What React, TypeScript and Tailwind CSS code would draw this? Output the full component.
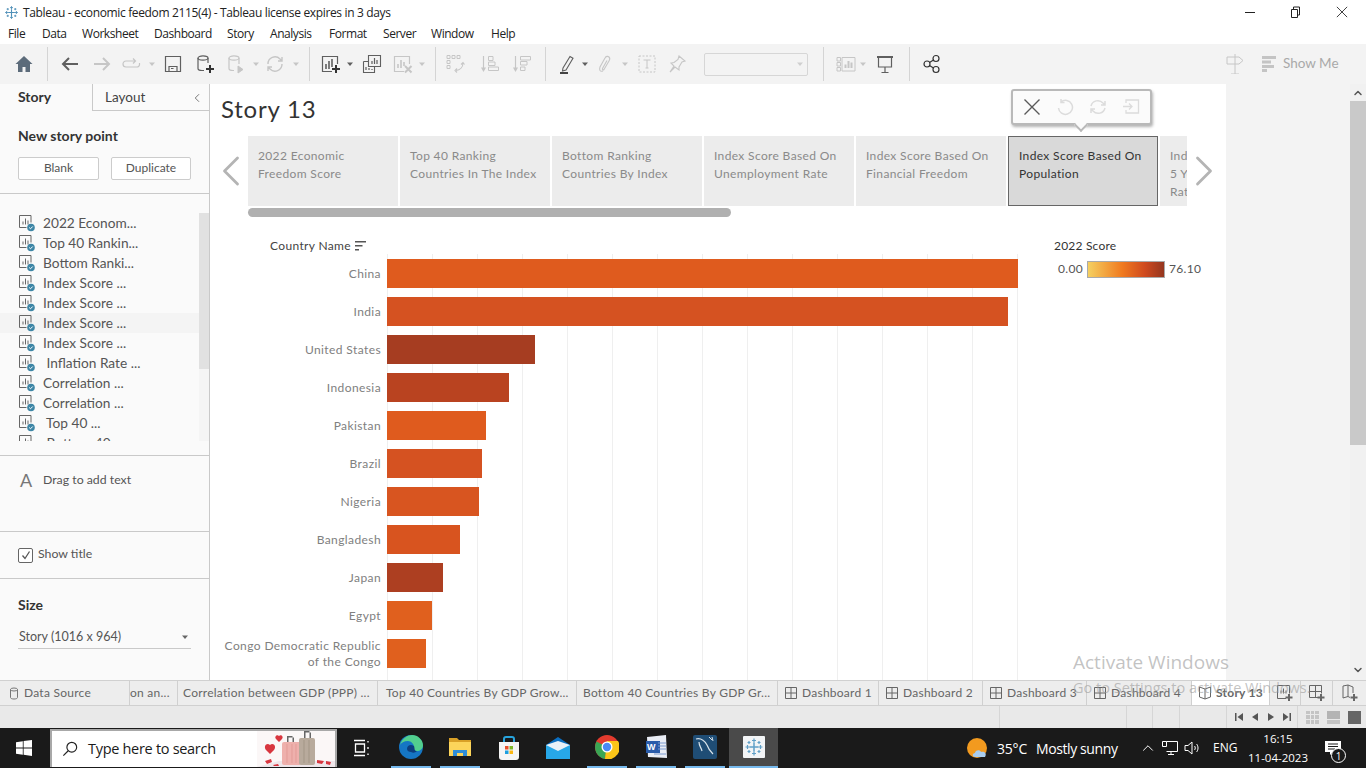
import type { ReactNode } from "react";
import { ChevronLeft, ChevronRight, ChevronUp, ChevronDown } from "lucide-react";

const menus = [
  { label: "File", w: "w-[34px]" },
  { label: "Data", w: "w-[40px]" },
  { label: "Worksheet", w: "w-[72px]" },
  { label: "Dashboard", w: "w-[73px]" },
  { label: "Story", w: "w-[43px]" },
  { label: "Analysis", w: "w-[59px]" },
  { label: "Format", w: "w-[54px]" },
  { label: "Server", w: "w-[48px]" },
  { label: "Window", w: "w-[60px]" },
  { label: "Help", w: "w-[34px]" },
];

const storyPoints = [
  "2022 Econom...",
  "Top 40 Rankin...",
  "Bottom Ranki...",
  "Index Score ...",
  "Index Score ...",
  "Index Score ...",
  "Index Score ...",
  " Inflation Rate ...",
  "Correlation ...",
  "Correlation ...",
  " Top 40 ...",
  " Bottom 40 ...",
];

const captions = [
  { text: ["2022 Economic", "Freedom Score"] },
  { text: ["Top 40 Ranking", "Countries In The Index"] },
  { text: ["Bottom Ranking", "Countries By Index"] },
  { text: ["Index Score Based On", "Unemployment Rate"] },
  { text: ["Index Score Based On", "Financial Freedom"] },
  { text: ["Index Score Based On", "Population"], active: true },
  { text: ["Index Score Based On", "5 Year GDP Growth", "Rate"] },
];

const bars = [
  { name: ["China"], bar: "w-[631px] bg-[#df5b1e]" },
  { name: ["India"], bar: "w-[621px] bg-[#d55221]" },
  { name: ["United States"], bar: "w-[148px] bg-[#a63d21]" },
  { name: ["Indonesia"], bar: "w-[122px] bg-[#b94320]" },
  { name: ["Pakistan"], bar: "w-[99px] bg-[#df5b1e]" },
  { name: ["Brazil"], bar: "w-[95px] bg-[#d55221]" },
  { name: ["Nigeria"], bar: "w-[92px] bg-[#d85520]" },
  { name: ["Bangladesh"], bar: "w-[73px] bg-[#d8541f]" },
  { name: ["Japan"], bar: "w-[56px] bg-[#ad3f21]" },
  { name: ["Egypt"], bar: "w-[45px] bg-[#e0601e]" },
  { name: ["Congo Democratic Republic", "of the Congo"], bar: "w-[39px] bg-[#e0601e]" },
];

const sheetTabs = [
  { label: "on an...", w: "w-[48px]", pad: "pl-0" },
  { label: "Correlation between GDP (PPP) ...", w: "w-[200px]", pad: "pl-[5px]" },
  { label: "Top 40 Countries By GDP Grow...", w: "w-[199px]", pad: "pl-[8px]" },
  { label: "Bottom 40 Countries By GDP Gr...", w: "w-[201px]", pad: "pl-[6px]" },
];

const dashTabs = [
  { label: "Dashboard 1", w: "w-[101px]" },
  { label: "Dashboard 2", w: "w-[104px]" },
  { label: "Dashboard 3", w: "w-[104px]" },
  { label: "Dashboard 4", w: "w-[105px]" },
];

function Ico({ children, className = "" }: { children: ReactNode; className?: string }) {
  return (
    <svg viewBox="0 0 20 20" fill="none" stroke="currentColor" className={`h-5 w-5 shrink-0 ${className}`}>
      {children}
    </svg>
  );
}

function Caret({ className = "" }: { className?: string }) {
  return (
    <svg viewBox="0 0 8 8" className={`h-2 w-2 shrink-0 fill-current ${className}`}>
      <path d="M1 2.5h6L4 6z" />
    </svg>
  );
}

function Sep({ className = "" }: { className?: string }) {
  return <div className={`h-[34px] w-px shrink-0 bg-[#d4d4d4] ${className}`} />;
}

function Plus() {
  return <path d="M15 11v8M11 15h8" stroke="#333" strokeWidth="2" />;
}

function TableauMark({ className = "", color = "#4f90b8" }: { className?: string; color?: string }) {
  return (
    <svg viewBox="0 0 20 20" className={className} stroke={color} strokeWidth="1.2" fill="none">
      <path d="M10 5.5v9M5.5 10h9" strokeWidth="1.5" />
      <path d="M10 1.5v4M8 3.5h4M10 14.5v4M8 16.5h4M1.5 10h4M3.5 8v4M14.5 10h4M16.5 8v4" />
      <path d="M5 4v3M3.5 5.5h3M15 4v3M13.5 5.5h3M5 13v3M3.5 14.5h3M15 13v3M13.5 14.5h3" />
    </svg>
  );
}

function Toolbar() {
  const on = "text-[#5f5f5f]";
  const off = "text-[#c6c6c6]";
  return (
    <div className="flex h-10 shrink-0 items-center bg-[#f3f3f3] pl-[14px] pr-[29px]">
      <svg viewBox="0 0 20 20" className="h-5 w-5 shrink-0 fill-[#5c6b7a]">
        <path d="M10 2 1.5 10H4v8h4.5v-5h3v5H16v-8h2.500z" />
      </svg>
      <Sep className="ml-[13px]" />
      <Ico className={`ml-[12px] ${on}`}>
        <path d="M18 10H3M9 4l-6 6 6 6" strokeWidth="2" />
      </Ico>
      <Ico className={`ml-[12px] ${off}`}>
        <path d="M2 10h15M11 4l6 6-6 6" strokeWidth="2" />
      </Ico>
      <Ico className={`ml-[10px] ${off}`}>
        <path d="M13 7H4a2.500 2.500 0 0 0 0 6h11a2.500 2.500 0 0 0 2.500-2.500V9M11 4.500 13.500 7 11 9.500" strokeWidth="1.200" />
      </Ico>
      <Caret className={`ml-[6px] ${off}`} />
      <Ico className={`ml-[7px] ${on}`}>
        <path d="M2.500 2.500h15v15h-15zM6 17.500v-5h8v5M8 14.500h2.500" strokeWidth="1.200" />
      </Ico>
      <Ico className={`ml-[12px] ${on}`}>
        <ellipse cx="8" cy="4" rx="5" ry="2.200" strokeWidth="1.200" />
        <path d="M3 4v10.500c0 1.300 2 2 4 2h2M13 4v5" strokeWidth="1.200" />
        <Plus />
      </Ico>
      <Ico className={`ml-[11px] ${off}`}>
        <ellipse cx="8" cy="4" rx="5" ry="2.200" strokeWidth="1.200" />
        <path d="M3 4v10.500c0 1.300 2 2 4 2h1M13 4v6" strokeWidth="1.200" />
        <path d="M12 12l5 3.500-5 3.500z" fill="currentColor" />
      </Ico>
      <Caret className={`ml-[6px] ${off}`} />
      <Ico className={`ml-[5px] ${off}`}>
        <path d="M3 10a7 7 0 0 1 12-5l2 2M17 10a7 7 0 0 1-12 5l-2-2M17 3v4h-4M3 17v-4h4" strokeWidth="1.400" />
      </Ico>
      <Caret className={`ml-[7px] ${off}`} />
      <Sep className="ml-[9px]" />
      <Ico className={`ml-[11px] ${on}`}>
        <path d="M11 17.500H1.500v-15h15V10" strokeWidth="1.200" />
        <path d="M5 10v5M8 7v8M11 5v8" strokeWidth="1.600" />
        <Plus />
      </Ico>
      <Caret className={`ml-[5px] ${on}`} />
      <Ico className={`ml-[8px] ${on}`}>
        <path d="M6.500 1.500h12v11h-12zM1.500 7.500h5M1.500 7.500v11h11v-6" strokeWidth="1.100" />
        <path d="M10 10V7M12.500 10V4M15 10V6M4 16v-3M7 16v-2M10 16v-1" strokeWidth="1.200" />
      </Ico>
      <Ico className={`ml-[11px] ${off}`}>
        <path d="M11 17.500H1.500v-15h15V10" strokeWidth="1.200" />
        <path d="M5 14v-4M8 14V6M11 12V8" strokeWidth="1.600" />
        <path d="m12 12 6.500 6.500M18.500 12 12 18.500" strokeWidth="2" />
      </Ico>
      <Caret className={`ml-[5px] ${off}`} />
      <Sep className="ml-[9px]" />
      <Ico className={`ml-[10px] ${off}`}>
        <path d="M1 1.500h3v3H1zM6 1.500h3v3H6zM11 1.500h3v3h-3zM1 6.500h3v3H1zM1 11.500h3v3H1z" strokeWidth="1" />
        <path d="M17 9c0 4-3 7-7 7.500M15 10.500 17 8.500l1.500 2M11 14.500 9 16.500l2 2" strokeWidth="1.100" />
      </Ico>
      <Ico className={`ml-[14px] ${off}`}>
        <path d="M3.500 2v14" strokeWidth="1.200" />
        <path d="M1 13.500h5L3.500 18z" fill="currentColor" stroke="none" />
        <path d="M8.500 2.500h4.500v4H8.500zM8.500 8h6.500v3.500H8.500zM8.500 13h10v3.500h-10z" strokeWidth="1" />
      </Ico>
      <Ico className={`ml-[12px] ${off}`}>
        <path d="M3.500 2v14" strokeWidth="1.200" />
        <path d="M1 13.500h5L3.500 18z" fill="currentColor" stroke="none" />
        <path d="M8.500 2.500h10v3.500h-10zM8.500 7.500h6.500v3.500H8.500zM8.500 13h4.500v3.500H8.500z" strokeWidth="1" />
      </Ico>
      <Sep className="ml-[13px]" />
      <Ico className={`ml-[11px] ${on}`}>
        <path d="M6 14 13 2.500l3 1.800L9 16l-3.500 1z" strokeWidth="1.100" />
        <path d="M3 19h8" strokeWidth="2" stroke="#444" />
      </Ico>
      <Caret className={`ml-[4px] ${on}`} />
      <Ico className={`ml-[6px] ${off}`}>
        <path d="M8 17c-3 1-4-1-3-4l5-9c1-2 3-2 4-1s1 2.500 0 4l-5 8.500c-1 1-2 0-1.500-1l4.500-8" strokeWidth="1.100" />
      </Ico>
      <Caret className={`ml-[6px] ${off}`} />
      <Ico className={`ml-[8px] ${off}`}>
        <path d="M2 2h16v16H2z" strokeWidth="1" strokeDasharray="2 1.500" />
        <path d="M6.500 6h7M10 6v8M8.500 14h3" strokeWidth="1" />
      </Ico>
      <Ico className={`ml-[10px] ${off}`}>
        <path d="M12 2l6 5-3 1-3 5 0 3-4-3-5 5 4-6-3-3 3-.500 4-3z" strokeWidth="1.100" />
      </Ico>
      <div className="ml-[17px] flex h-[23px] w-[104px] shrink-0 items-center justify-end rounded-[2px] border border-[#d6d6d6] pr-[3px]">
        <Caret className="text-[#cfcfcf]" />
      </div>
      <Sep className="ml-[15px]" />
      <Ico className={`ml-[12px] ${off}`}>
        <path d="M1 3.500h3.500V7H1zM1 8.500h3.500V12H1zM1 13.500h3.500V17H1zM6 3.500h13v13.500H6z" strokeWidth="1" />
        <path d="M9.500 14v-3.500M12.500 14V7M15.500 14V8.500" strokeWidth="2" />
      </Ico>
      <Caret className={`ml-[3px] ${off}`} />
      <Ico className={`ml-[8px] ${on}`}>
        <path d="M2 3h16" strokeWidth="2" />
        <path d="M3.500 3.500v9.500h13V3.500M10 13v5M6.500 18.500h7" strokeWidth="1.200" />
      </Ico>
      <Sep className="ml-[14px]" />
      <Ico className={`ml-[12px] text-[#333]`}>
        <circle cx="5" cy="10" r="3" strokeWidth="1.200" />
        <circle cx="14" cy="4.500" r="3" strokeWidth="1.200" />
        <circle cx="14" cy="15.500" r="3" strokeWidth="1.200" />
        <path d="m7.500 8.500 4-2.500M7.500 11.500l4 2.500" strokeWidth="1.200" />
      </Ico>
      <Ico className={`ml-auto ${off}`}>
        <path d="M10 0v20M6 20h8M2 3h12l4 3.500-4 3.500H2z" strokeWidth="1" />
      </Ico>
      <svg viewBox="0 0 14 16" className="ml-[17px] h-4 w-[14px] shrink-0 fill-[#c4c4c4]">
        <path d="M0 0h14v3H0zM0 4.500h9v3H0zM0 9h12v3H0zM0 13h5v3H0z" />
      </svg>
      <span className="ml-[7px] w-[54px] whitespace-nowrap pb-px text-[13.5px] text-[#a9a9a9]">Show Me</span>
    </div>
  );
}

function SheetIcon() {
  return (
    <svg viewBox="0 0 18 18" className="h-[18px] w-[18px] shrink-0" fill="none">
      <path d="M13 1.500H1.500v12h7" stroke="#666" />
      <path d="M13 1.500v7" stroke="#666" />
      <path d="M5 10.500v-3M7.500 10.500v-6M10 10.500v-4" stroke="#666" />
      <circle cx="13" cy="13.500" r="3.800" fill="#3e86a6" />
      <path d="m11.200 13.500 1.300 1.300 2.200-2.300" stroke="#fff" />
    </svg>
  );
}

function Sidebar() {
  return (
    <aside className="flex w-[210px] shrink-0 flex-col overflow-hidden border-r border-[#c9c9c9] bg-[#fafafa] text-[#555]">
      <div className="flex h-[27px] shrink-0">
        <div className="flex w-[92px] items-center pb-[2px] pl-[18px] text-[14px] font-bold text-[#333]">Story</div>
        <div className="flex flex-1 items-center justify-between border-b border-l border-[#c9c9c9] pl-[12px] pr-[5px] pt-px text-[13.5px] text-[#444]">
          Layout
          <ChevronLeft className="h-[14px] w-[14px] text-[#666]" strokeWidth={1.500} />
        </div>
      </div>
      <div className="h-[83px] shrink-0 border-b border-[#c9c9c9] px-[18px]">
        <div className="flex h-[46px] items-center pt-[3px] text-[14px] font-bold text-[#333]">New story point</div>
        <div className="flex gap-3">
          <button className="h-[23px] w-[81px] rounded-[2px] border border-[#ccc] bg-white pb-px text-[12px] text-[#555]">Blank</button>
          <button className="h-[23px] w-[80px] rounded-[2px] border border-[#ccc] bg-white pb-px text-[12px] text-[#555]">Duplicate</button>
        </div>
      </div>
      <div className="flex h-[262px] shrink-0 items-start border-b border-[#c9c9c9] pt-[19px]">
        <div className="h-[228px] w-[199px] overflow-hidden">
          {storyPoints.map((p, i) => (
            <div key={i} className={`flex h-5 items-center pl-[18px] text-[13.7px] ${i === 5 ? "bg-[#f4f4f4]" : ""}`}>
              <SheetIcon />
              <span className="ml-[7px] whitespace-pre">{p}</span>
            </div>
          ))}
        </div>
        <div className="h-[228px] w-[10px] bg-[#f5f5f5]">
          <div className="h-[156px] bg-[#e1e1e1]" />
        </div>
      </div>
      <div className="flex h-[76px] shrink-0 items-start border-b border-[#c9c9c9] pt-[14px] pl-[20px]">
        <span className="w-[23px] text-[18px] leading-[20px] text-[#777]">A</span>
        <span className="text-[12.3px] leading-[20px]">Drag to add text</span>
      </div>
      <div className="flex h-[47px] shrink-0 items-center border-b border-[#c9c9c9] pl-[18px]">
        <div className="flex h-[15px] w-[15px] items-center justify-center rounded-[2px] border border-[#666] bg-white">
          <svg viewBox="0 0 12 12" className="h-3 w-3" fill="none" stroke="#555" strokeWidth="1.300">
            <path d="m2.500 6.500 2.500 3 4.500-7" />
          </svg>
        </div>
        <span className="ml-[5px] pb-[2px] text-[12.3px]">Show title</span>
      </div>
      <div className="px-[18px]">
        <div className="flex h-[54px] items-center pb-[3px] text-[14px] font-bold text-[#333]">Size</div>
        <div className="-mt-[4px] flex h-[20px] w-[173px] items-start justify-between border-b border-[#c9c9c9] pl-px pr-[2px] text-[12.5px] leading-[16px]">
          Story (1016 x 964)
          <Caret className="mt-[4px] text-[#666]" />
        </div>
      </div>
    </aside>
  );
}

function Popup() {
  return (
    <div className="absolute left-[801px] top-[5px] flex h-[36px] w-[141px] items-center rounded-[3px] border-2 border-[#b9b9b9] bg-[#fbfbfb] pl-[10px] shadow-[1px_2px_3px_rgba(0,0,0,0.3)]">
      <svg viewBox="0 0 18 18" className="h-[18px] w-[18px]" fill="none" stroke="#5a5a5a" strokeWidth="1.400">
        <path d="m1.500 1.500 15 15M16.500 1.500l-15 15" />
      </svg>
      <svg viewBox="0 0 18 18" className="ml-[15px] h-[18px] w-[18px]" fill="none" stroke="#dcdcdc" strokeWidth="1.500">
        <path d="M5 4a7 7 0 1 1-2.500 6M5 1v3.500h3.500" />
      </svg>
      <svg viewBox="0 0 18 18" className="ml-[15px] h-[18px] w-[18px]" fill="none" stroke="#dcdcdc" strokeWidth="1.500">
        <path d="M2 8a7 7 0 0 1 12-3l2 2M16 10a7 7 0 0 1-12 3l-2-2M16 3v4h-4M2 15v-4h4" />
      </svg>
      <svg viewBox="0 0 18 18" className="ml-[15px] h-[18px] w-[18px]" fill="none" stroke="#dcdcdc" strokeWidth="1.300">
        <path d="M4 5V2h12.500v13H4v-3M1 8.500h9M7 5.500l3 3-3 3" />
      </svg>
      <div className="absolute left-[63px] top-[29px] h-[10px] w-[10px] rotate-45 border-b-2 border-r-2 border-[#b9b9b9] bg-[#fbfbfb]" />
    </div>
  );
}

function Canvas() {
  return (
    <main className="relative flex w-[1016px] shrink-0 flex-col overflow-hidden bg-white">
      <div className="flex h-[52px] shrink-0 items-center pb-[2px] pl-[11px] text-[24px] tracking-[0.8px] text-[#333]">Story 13</div>
      <Popup />
      <div className="flex h-[70px] shrink-0 items-center">
        <div className="flex w-[38px] shrink-0 justify-center">
          <ChevronLeft className="ml-[4px] h-[52px] w-[52px] shrink-0 text-[#b4b4b4]" strokeWidth={1.300} />
        </div>
        <div className="flex h-full w-[939px] shrink-0 gap-[2px] overflow-hidden">
          {captions.map((c, i) => (
            <div
              key={i}
              className={`h-full w-[150px] shrink-0 text-[12px] leading-[18px] tracking-[0.35px] ${
                c.active ? "border border-[#666] bg-[#d9d9d9] pl-[10px] pt-[10px] text-[#333]" : "bg-[#ececec] pl-[10px] pt-[11px] text-[#8a8a8a]"
              }`}
            >
              {c.text.map((t) => (
                <div key={t} className="whitespace-nowrap">{t}</div>
              ))}
            </div>
          ))}
        </div>
        <ChevronRight className="-ml-[9px] h-[52px] w-[52px] shrink-0 text-[#b4b4b4]" strokeWidth={1.300} />
      </div>
      <div className="ml-[38px] mt-[2px] h-[9px] w-[483px] shrink-0 rounded-full bg-[#b0b0b0]" />
      <div className="mt-[20px] flex">
        <div className="w-[808px] shrink-0">
          <div className="flex h-[17px] items-center pl-[60px] text-[12px] tracking-[0.35px] text-[#444]">
            Country Name
            <svg viewBox="0 0 12 10" className="ml-[4px] h-[10px] w-3 fill-[#555]">
              <path d="M0 0h11v1.500H0zM0 4h7.500v1.500H0zM0 8h4v1.500H0z" />
            </svg>
          </div>
          <div className="flex">
            <div className="w-[177px] shrink-0 pt-[5px]">
              {bars.map((b) => (
                <div key={b.name[0]} className="mb-[9px] flex h-[29px] flex-col items-end justify-center pr-[6px] text-[12px] leading-[16px] tracking-[0.4px] text-[#808080]">
                  {b.name.map((n) => (
                    <div key={n} className="whitespace-nowrap">{n}</div>
                  ))}
                </div>
              ))}
            </div>
            <div className="h-[430px] w-[631px] bg-[linear-gradient(to_right,#efefef_1px,transparent_1px)] bg-[length:45px_100%] pt-[5px]">
              {bars.map((b) => (
                <div key={b.name[0]} className={`mb-[9px] h-[29px] ${b.bar}`} />
              ))}
            </div>
          </div>
        </div>
        <div className="ml-[36px]">
          <div className="flex h-[17px] items-center text-[12px] tracking-[0.2px] text-[#333]">2022 Score</div>
          <div className="mt-[6px] flex items-center text-[12px] tracking-[0.3px] text-[#555]">
            <span className="ml-[4px] w-[29px]">0.00</span>
            <div className="h-[17px] w-[78px] border border-[#aaa] bg-[linear-gradient(to_right,#f5d061,#f07a1f_45%,#cf4a1f_75%,#94361f)]" />
            <span className="ml-[4px]">76.10</span>
          </div>
        </div>
      </div>
    </main>
  );
}

function DashIcon() {
  return (
    <svg viewBox="0 0 12 12" className="mr-[5px] h-3 w-3 shrink-0" fill="none" stroke="#666">
      <path d="M.500.500h11v11H.500zM6 .500v11M.500 6h11" />
    </svg>
  );
}

function Tabs() {
  return (
    <div className="flex h-[26px] shrink-0 border-y border-[#d0d0d0] bg-[#ededed] text-[12px] tracking-[0.25px] text-[#666]">
      <div className="flex w-[130px] items-center border-r border-[#d0d0d0] pl-[9px]">
        <svg viewBox="0 0 10 13" className="mr-[5px] h-[13px] w-[10px]" fill="none" stroke="#777">
          <ellipse cx="5" cy="2.500" rx="3.500" ry="1.500" />
          <path d="M1.500 2.500v8c0 2 7 2 7 0v-8" />
        </svg>
        Data Source
      </div>
      {sheetTabs.map((t) => (
        <div key={t.label} className={`flex items-center overflow-hidden whitespace-nowrap border-r border-[#d0d0d0] ${t.w} ${t.pad}`}>
          {t.label}
        </div>
      ))}
      {dashTabs.map((t) => (
        <div key={t.label} className={`flex items-center whitespace-nowrap border-r border-[#d0d0d0] pl-[7px] ${t.w}`}>
          <DashIcon />
          {t.label}
        </div>
      ))}
      <div className="flex w-[77px] items-center justify-center bg-white font-bold text-[#666]">
        <svg viewBox="0 0 14 14" className="mr-[4px] h-[14px] w-[14px]" fill="none" stroke="#666">
          <path d="M7 3 1.500 1v10L7 13l5.500-2V1zM7 3v10" />
        </svg>
        Story 13
      </div>
      <div className="flex w-[32px] items-center justify-center border-x border-[#d0d0d0]">
        <svg viewBox="0 0 18 18" className="h-[18px] w-[18px]" fill="none" stroke="#666">
          <path d="M10 14.500H1.500v-13h12v8M5 9.500v-3M7.500 9.500v-5M10 9.500v-3" />
          <path d="M13 10v7M9.500 13.500h7" strokeWidth="2" />
        </svg>
      </div>
      <div className="flex w-[32px] items-center justify-center border-r border-[#d0d0d0]">
        <svg viewBox="0 0 18 18" className="h-[18px] w-[18px]" fill="none" stroke="#666">
          <path d="M10 13.500H1.500v-12h12v8M7.500 1.500v12M1.500 7.500h12" />
          <path d="M13 10v7M9.500 13.500h7" strokeWidth="2" />
        </svg>
      </div>
      <div className="flex flex-1 items-center justify-center">
        <svg viewBox="0 0 18 18" className="h-[18px] w-[18px]" fill="none" stroke="#666">
          <path d="M9 13.500 7 12.500l-5 1.500V2l5-1 5 2v6M7 1v11.500" />
          <path d="M13 10v7M9.500 13.500h7" strokeWidth="2" />
        </svg>
      </div>
    </div>
  );
}

function StatusBar() {
  return (
    <div className="flex h-[22px] shrink-0 bg-[#e9e9e9]">
      <div className="w-[1000px] border-r border-[#d6d6d6]" />
      <div className="w-[127px] border-r border-[#d6d6d6]" />
      <div className="w-[26px] border-r border-[#d6d6d6]" />
      <div className="w-[27px] border-r border-[#d6d6d6]" />
      <div className="w-[47px] border-r border-[#d6d6d6]" />
      <div className="flex w-[71px] items-center justify-center gap-[6px] border-r border-[#d6d6d6] fill-[#555] pl-[2px]">
        <svg viewBox="0 0 10 10" className="h-[10px] w-[10px]"><path d="M1 1h1.500v8H1zM9 1v8L3.500 5z" /></svg>
        <svg viewBox="0 0 10 10" className="h-[10px] w-[10px]"><path d="M8 1v8L2 5z" /></svg>
        <svg viewBox="0 0 10 10" className="h-[10px] w-[10px]"><path d="M2 1v8l6-4z" /></svg>
        <svg viewBox="0 0 10 10" className="h-[10px] w-[10px]"><path d="M9 1H7.500v8H9zM1 1v8l5.500-4z" /></svg>
      </div>
      <div className="flex flex-1 items-center gap-[8px] pl-[8px]">
        <div className="grid h-[13px] w-[13px] grid-cols-3 gap-px">
          {[...Array(9)].map((_, i) => (
            <div key={i} className="bg-[#c4c4c4]" />
          ))}
        </div>
        <div className="flex h-[13px] w-[13px] flex-col gap-px">
          <div className="h-[8px] bg-[#b4b4b4]" />
          <div className="h-[4px] bg-[#c4c4c4]" />
        </div>
        <div className="h-[13px] w-[13px] bg-[#666]" />
      </div>
    </div>
  );
}

function TaskBtn({ children, underline, active }: { children: ReactNode; underline?: boolean; active?: boolean }) {
  return (
    <div className={`flex h-10 w-[49px] shrink-0 justify-center ${active ? "bg-[#4a4a4a]" : ""}`}>
      <div className={`flex h-10 items-center justify-center ${active ? "w-[49px]" : "w-10"} ${underline ? "border-b-[2px] border-[#76b9ed]" : ""}`}>
        {children}
      </div>
    </div>
  );
}

function Suitcases() {
  return (
    <svg viewBox="0 0 78 36" className="h-9 w-[78px] shrink-0">
      <rect width="78" height="36" fill="#fbf7f7" />
      <path d="M0 36 22 30h56v6z" fill="#eee6ea" />
      <path d="M30 12V5h1.500v7zM37 12V5h-1.500v7zM30 5h7v1.500h-7z" fill="#666" />
      <path d="M47 8V0h1.500v8zM54 8V0h-1.500v8zM47 0h7v1.500h-7z" fill="#666" />
      <rect x="25" y="11" width="19" height="23" rx="2" fill="#eeb0ac" />
      <rect x="42" y="7" width="16" height="27" rx="2" fill="#b8aa9c" />
      <path d="M30 13v19M35 13v19M39 13v19" stroke="#e39b97" />
      <path d="M47 9v23M52 9v23" stroke="#a39686" />
      <path d="M13 14c-3-3-7 1-4 5l4 4 4-4c3-4-1-8-4-5zM22 5c-2-2-5 1-3 3l3 3 3-3c2-2-1-5-3-3z" fill="#d8363f" />
      <path d="M8 30l6-2 1 3-5 2zM16 34l5-1 1 2h-5zM60 29l7 1-2 3-5-1zM69 30l5 1-1 3-4-1z" fill="#d8363f" />
    </svg>
  );
}

function Taskbar() {
  return (
    <div className="flex h-10 shrink-0 items-center bg-[#1a1a1a] font-['Open_Sans',sans-serif] text-white">
      <div className="flex h-10 w-[48px] items-center justify-center">
        <svg viewBox="0 0 16 16" className="h-4 w-4 fill-white">
          <path d="M0 2.200 6.800 1.200V7.600H0zM7.600 1.100 16 0v7.600H7.600zM0 8.400h6.800v6.400L0 13.800zM7.600 8.400H16V16l-8.400-1.200z" />
        </svg>
      </div>
      <div className="ml-[2px] flex h-[38px] w-[287px] shrink-0 items-center overflow-hidden border-2 border-b-0 border-[#a8a8a8] bg-white pl-[10px] text-[#1a1a1a]">
        <svg viewBox="0 0 18 18" className="h-4 w-4 shrink-0" fill="none" stroke="#222" strokeWidth="1.300">
          <circle cx="11" cy="7" r="5.500" />
          <path d="M7 11 1.500 16.500" />
        </svg>
        <span className="ml-[10px] w-[169px] shrink-0 whitespace-nowrap text-[14.5px] tracking-[-0.3px]">Type here to search</span>
        <Suitcases />
      </div>
      <TaskBtn>
        <svg viewBox="0 0 18 18" className="h-[18px] w-[18px]" fill="none" stroke="#fff">
          <path d="M1 1.500h11M1 16.500h11M2.500 5h9v8h-9zM15 2v1.500M15 8v2M15 14.500V16" strokeWidth="1.300" />
        </svg>
      </TaskBtn>
      <TaskBtn underline>
        <svg viewBox="0 0 24 24" className="h-6 w-6">
          <circle cx="12" cy="12" r="12" fill="#1576c4" />
          <path d="M1 10C3 3 9 0 13 0c6 0 11 5 11 10 0 4-3 6-6 6-4 0-3-3-3-4 0-3-3-6-6-6-4 0-7 2-8 4z" fill="#52cf8e" />
          <path d="M8 14c0-4 4-5 7-3 1 3 0 5 3 5-2 2-4 2-6 1-2 0-4-1-4-3z" fill="#0c3f7f" />
        </svg>
      </TaskBtn>
      <TaskBtn underline>
        <svg viewBox="0 0 22 20" className="h-5 w-[22px]">
          <path d="M0 1h8l2 2h12v16H0z" fill="#d9a127" />
          <path d="M0 5h22v14H0z" fill="#fcd55b" />
          <path d="M4 19v-6h14v6h-4v-3H8v3z" fill="#2f8ed8" />
        </svg>
      </TaskBtn>
      <TaskBtn>
        <svg viewBox="0 0 22 24" className="h-6 w-[22px]">
          <path d="M1 6h20v15a3 3 0 0 1-3 3H4a3 3 0 0 1-3-3z" fill="#f5f5f5" />
          <path d="M6 6V3a2 2 0 0 1 2-2h6a2 2 0 0 1 2 2v3" fill="none" stroke="#27a3dc" strokeWidth="2" />
          <path d="M7 10h3.500v3.500H7z" fill="#e8502a" />
          <path d="M11.500 10H15v3.500h-3.500z" fill="#7fba2a" />
          <path d="M7 14.500h3.500V18H7z" fill="#1d9fe0" />
          <path d="M11.500 14.500H15V18h-3.500z" fill="#fcb813" />
        </svg>
      </TaskBtn>
      <TaskBtn>
        <svg viewBox="0 0 24 22" className="h-[22px] w-6">
          <path d="M12 0 24 8v14H0V8z" fill="#0a6fc2" />
          <path d="M0 8h24v14H0z" fill="#27a7e8" />
          <path d="M0 8l12 6 12-6-12-4z" fill="#e8f1f8" />
        </svg>
      </TaskBtn>
      <TaskBtn underline>
        <svg viewBox="0 0 24 24" className="h-6 w-6">
          <circle cx="12" cy="12" r="12" fill="#e33b2e" />
          <path d="M12 12 1.500 6.500A12 12 0 0 0 10 24z" fill="#3aa655" />
          <path d="M12 6h11a12 12 0 0 1-13 18z" fill="#fbc518" />
          <circle cx="12" cy="12" r="5.500" fill="#fff" />
          <circle cx="12" cy="12" r="4.200" fill="#4a8af4" />
        </svg>
      </TaskBtn>
      <TaskBtn underline>
        <svg viewBox="0 0 24 24" className="h-6 w-6">
          <path d="M3 2 22 0l1 23-19-1z" fill="#e9edf5" />
          <path d="M2 6h14v12H2z" fill="#2a5caa" />
          <path d="M14 8h8M14 11h8M14 14h8M10 19h12" stroke="#7d9bcf" />
          <text x="3" y="15" fontSize="9" fontWeight="700" fill="#fff" fontFamily="Liberation Sans, sans-serif">W</text>
        </svg>
      </TaskBtn>
      <TaskBtn underline>
        <svg viewBox="0 0 24 24" className="h-6 w-6">
          <rect width="24" height="24" rx="2" fill="#1f4d75" />
          <path d="M3 4c4-1 8 1 11 6 1 3 3 6 6 9M6 7c0 4 2 5 3 9" fill="none" stroke="#d9e3ea" strokeWidth="1.200" />
          <path d="M16 2l3 3M19 2l1 4" stroke="#d9e3ea" />
        </svg>
      </TaskBtn>
      <TaskBtn underline active>
        <div className="flex h-[22px] w-[22px] items-center justify-center rounded-[1px] bg-[#f2f4f6]">
          <TableauMark className="h-5 w-5" color="#5f9fc7" />
        </div>
      </TaskBtn>
      <svg viewBox="0 0 22 22" className="ml-[189px] h-[22px] w-[22px] shrink-0">
        <circle cx="10" cy="11" r="10" fill="#f29a1f" />
        <path d="M8 20c-3 0-3-4 0-4 0-3 5-4 6-1 4-1 6 2 4 5z" fill="#a9cdf0" />
      </svg>
      <span className="ml-[8px] w-[39px] whitespace-nowrap text-[14px] tracking-[-0.2px]">35°C</span>
      <span className="w-[82px] whitespace-nowrap text-[14px] tracking-[-0.4px]">Mostly sunny</span>
      <ChevronUp className="ml-[21px] h-[18px] w-[18px] shrink-0 text-white" strokeWidth={1.300} />
      <svg viewBox="0 0 18 18" className="ml-[4px] h-[18px] w-[18px] shrink-0" fill="none" stroke="#fff">
        <path d="M5.500 2.500h11v10h-11M10 12.500v3M7 15.500h6M1.500 2.500h4v5h-4z" />
      </svg>
      <svg viewBox="0 0 18 18" className="ml-[4px] h-[18px] w-[18px] shrink-0" fill="none" stroke="#fff">
        <path d="M2 6.500h3l4-3.500v12l-4-3.500H2zM11.500 7c1 1 1 3 0 4M13.500 5c2 2 2 6 0 8" />
      </svg>
      <span className="ml-[12px] w-[24px] text-[12px]">ENG</span>
      <div className="ml-[7px] flex w-[68px] flex-col items-center text-[11.5px] leading-[19px]">
        <span>16:15</span>
        <span className="whitespace-nowrap">11-04-2023</span>
      </div>
      <div className="relative ml-[13px]">
        <svg viewBox="0 0 16 16" className="h-4 w-4 fill-white">
          <path d="M0 1h16v11H8l-3 3v-3H0z" />
          <path d="M3 4h10M3 6.500h10M3 9h7" stroke="#1a1a1a" />
        </svg>
        <div className="absolute left-[6px] top-[8px] flex h-[15px] w-[15px] items-center justify-center rounded-full border border-white bg-[#1a1a1a] text-[10px] leading-none">1</div>
      </div>
    </div>
  );
}

export default function App() {
  return (
    <div className="relative flex h-[768px] w-[1366px] flex-col overflow-hidden bg-white font-['Lato',sans-serif]">
      <div className="flex h-6 shrink-0 items-center pl-1 font-['Open_Sans',sans-serif] text-[12px] text-[#222]">
        <TableauMark className="h-[15px] w-[15px]" />
        <span className="ml-[4px] whitespace-nowrap pt-[2px] tracking-[-0.35px]">Tableau - economic feedom 2115(4) - Tableau license expires in 3 days</span>
        <div className="ml-auto flex items-center pr-[18px]">
          <div className="mr-[34px] h-px w-[10px] bg-[#222]" />
          <svg viewBox="0 0 12 12" className="mr-[35px] h-3 w-3" fill="none" stroke="#222">
            <path d="M2.500 3.500h6v8h-6zM4.500 3.500v-2.500h6v8H8.500" />
          </svg>
          <svg viewBox="0 0 14 14" className="h-3 w-3" fill="none" stroke="#222">
            <path d="m1 1 12 12M13 1 1 13" />
          </svg>
        </div>
      </div>
      <div className="flex h-5 shrink-0 items-center pl-2 font-['Open_Sans',sans-serif] text-[12px] tracking-[-0.45px] text-[#222]">
        {menus.map((m) => (
          <span key={m.label} className={m.w}>{m.label}</span>
        ))}
      </div>
      <Toolbar />
      <div className="flex min-h-0 flex-1">
        <Sidebar />
        <Canvas />
        <div className="w-[124px] shrink-0 bg-[#f3f3f3]" />
        <div className="flex w-4 shrink-0 flex-col bg-[#f1f1f1]">
          <div className="flex h-[17px] items-center justify-center">
            <ChevronUp className="h-3 w-3 text-[#555]" strokeWidth={3} />
          </div>
          <div className="h-[344px] bg-[#c9c9c9]" />
          <div className="mt-auto flex h-[20px] items-center justify-center">
            <ChevronDown className="h-3 w-3 text-[#555]" strokeWidth={3} />
          </div>
        </div>
      </div>
      <Tabs />
      <StatusBar />
      <Taskbar />
      <div className="pointer-events-none absolute left-[1073px] top-[650px] font-['Open_Sans',sans-serif] text-[#9a9a9a]/60">
        <div className="text-[19px] leading-[25px]">Activate Windows</div>
        <div className="mt-[3px] whitespace-nowrap text-[14.5px] leading-[20px]">Go to Settings to activate Windows.</div>
      </div>
    </div>
  );
}
